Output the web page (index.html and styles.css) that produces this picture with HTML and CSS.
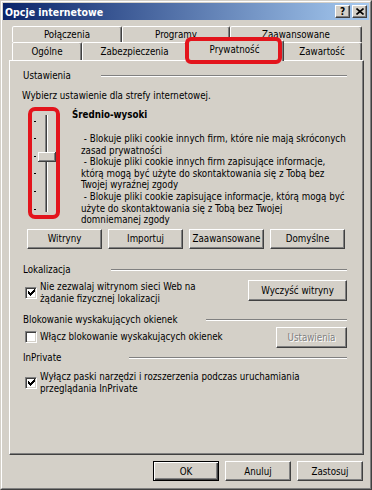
FILE: index.html
```html
<!DOCTYPE html>
<html lang="pl">
<head>
<meta charset="utf-8">
<title>Opcje internetowe</title>
<link rel="stylesheet" href="styles.css">
</head>
<body>
<div class="window">
  <div class="frame">
    <div class="titlebar">
      <span class="title">Opcje internetowe</span>
      <div class="tbtns">
        <span class="tbtn">?</span>
        <span class="tbtn"><svg width="8" height="7" viewBox="0 0 8 7"><path d="M0.5 0.5 L7.5 6.5 M7.5 0.5 L0.5 6.5" stroke="#000" stroke-width="1.6" fill="none"/></svg></span>
      </div>
    </div>
    <div class="content">
      <div class="tabs">
        <div class="tabrow row1">
          <div class="tab w-pol">Połączenia</div>
          <div class="tab w-prog">Programy</div>
          <div class="tab w-zaaw">Zaawansowane</div>
        </div>
        <div class="tabrow row2">
          <div class="tab w-og">Ogólne</div>
          <div class="tab w-zab">Zabezpieczenia</div>
          <div class="tab w-pryw active">Prywatność</div>
          <div class="tab w-zaw">Zawartość</div>
        </div>
      </div>
      <div class="panel">
        <div class="ghead"><span>Ustawienia</span><i class="etch e-ust"></i></div>
        <div class="intro">Wybierz ustawienie dla strefy internetowej.</div>
        <div class="settings">
          <div class="slider">
            <svg width="24" height="104" viewBox="0 0 24 104" shape-rendering="crispEdges">
              <rect x="13" y="4" width="1" height="97" fill="#808080"/>
              <rect x="14" y="4" width="1" height="97" fill="#404040"/>
              <rect x="15" y="4" width="1" height="97" fill="#ffffff"/>
              <rect x="2" y="10" width="2" height="1" fill="#000"/>
              <rect x="2" y="27" width="2" height="1" fill="#000"/>
              <rect x="2" y="45" width="2" height="1" fill="#000"/>
              <rect x="2" y="62" width="2" height="1" fill="#000"/>
              <rect x="2" y="80" width="2" height="1" fill="#000"/>
              <rect x="2" y="98" width="2" height="1" fill="#000"/>
              <rect x="6" y="41" width="18" height="10" fill="#d4d0c8"/>
              <rect x="6" y="41" width="18" height="1" fill="#ffffff"/>
              <rect x="6" y="41" width="1" height="10" fill="#ffffff"/>
              <rect x="23" y="41" width="1" height="10" fill="#404040"/>
              <rect x="6" y="50" width="18" height="1" fill="#404040"/>
              <rect x="22" y="42" width="1" height="8" fill="#808080"/>
              <rect x="7" y="49" width="16" height="1" fill="#808080"/>
            </svg>
          </div>
          <div class="level">
            <div class="level-name">Średnio-wysoki</div>
            <div class="desc">&nbsp;- Blokuje pliki cookie innych firm, które nie mają skróconych<br>zasad prywatności<br>&nbsp;- Blokuje pliki cookie innych firm zapisujące informacje,<br>którą mogą być użyte do skontaktowania się z Tobą bez<br>Twojej wyraźnej zgody<br>&nbsp;- Blokuje pliki cookie zapisujące informacje, którą mogą być<br>użyte do skontaktowania się z Tobą bez Twojej<br>domniemanej zgody</div>
          </div>
        </div>
        <div class="btnrow">
          <button class="btn">Witryny</button>
          <button class="btn">Importuj</button>
          <button class="btn">Zaawansowane</button>
          <button class="btn">Domyślne</button>
        </div>

        <div class="ghead g-loc"><span>Lokalizacja</span><i class="etch e-loc"></i></div>
        <div class="chkrow r-loc">
          <span class="chk"><svg width="7" height="7" viewBox="0 0 7 7" shape-rendering="crispEdges"><path d="M0 2h1v3h-1z M1 3h1v3h-1z M2 4h1v3h-1z M3 3h1v3h-1z M4 2h1v3h-1z M5 1h1v3h-1z M6 0h1v3h-1z" fill="#000000"/></svg></span>
          <span class="chklabel">Nie zezwalaj witrynom sieci Web na<br>żądanie fizycznej lokalizacji</span>
          <button class="btn btn-clear">Wyczyść witryny</button>
        </div>

        <div class="ghead g-pop"><span>Blokowanie wyskakujących okienek</span><i class="etch e-pop"></i></div>
        <div class="chkrow r-pop">
          <span class="chk"></span>
          <span class="chklabel">Włącz blokowanie wyskakujących okienek</span>
          <button class="btn btn-set" disabled>Ustawienia</button>
        </div>

        <div class="ghead g-inp"><span>InPrivate</span><i class="etch e-inp"></i></div>
        <div class="chkrow r-inp">
          <span class="chk"><svg width="7" height="7" viewBox="0 0 7 7" shape-rendering="crispEdges"><path d="M0 2h1v3h-1z M1 3h1v3h-1z M2 4h1v3h-1z M3 3h1v3h-1z M4 2h1v3h-1z M5 1h1v3h-1z M6 0h1v3h-1z" fill="#000000"/></svg></span>
          <span class="chklabel">Wyłącz paski narzędzi i rozszerzenia podczas uruchamiania<br>przeglądania InPrivate</span>
        </div>
      </div>
      <div class="footer">
        <button class="btn btn-default">OK</button>
        <button class="btn">Anuluj</button>
        <button class="btn">Zastosuj</button>
      </div>
    </div>
  </div>
</div>
</body>
</html>
```

FILE: styles.css
```css
* { box-sizing: border-box; }
html, body { margin: 0; padding: 0; }
body {
  width: 372px;
  height: 490px;
  overflow: hidden;
  background: #d4d0c8;
  font-family: "DejaVu Sans Condensed", "Liberation Sans", sans-serif;
  font-size: 9.7px;
  color: #000;
}
.window {
  width: 372px;
  height: 490px;
  border: 1px solid;
  border-color: #d4d0c8 #404040 #404040 #d4d0c8;
}
.frame {
  height: 100%;
  border: 1px solid;
  border-color: #ffffff #808080 #808080 #ffffff;
  padding: 1px;
  display: flex;
  flex-direction: column;
}
.titlebar {
  height: 17px;
  flex: none;
  background: linear-gradient(to right, #0a246a, #a6caf0);
  display: flex;
  align-items: center;
  padding: 0 2px 0 2px;
}
.title {
  flex: 1;
  color: #fff;
  font-weight: bold;
  font-size: 10.5px;
  white-space: nowrap;
}
.tbtns { display: flex; gap: 2px; }
.tbtn {
  width: 15px;
  height: 13px;
  background: #d4d0c8;
  border: 1px solid;
  border-color: #ffffff #404040 #404040 #ffffff;
  box-shadow: inset -1px -1px #808080;
  display: flex;
  align-items: center;
  justify-content: center;
  font-weight: bold;
  font-size: 10px;
  line-height: 1;
}
.content {
  flex: 1;
  padding: 6px 5px 0 6px;
  display: flex;
  flex-direction: column;
}
.tabs { padding-left: 3px; }
.tabrow { display: flex; }
.row1 { height: 16px; }
.row2 { height: 18px; }
.tab {
  height: 100%;
  background: #d4d0c8;
  border: 1px solid;
  border-bottom: none;
  border-color: #ffffff #404040 transparent #ffffff;
  box-shadow: inset -1px 0 #808080;
  border-radius: 2px 2px 0 0;
  display: flex;
  align-items: center;
  justify-content: center;
  white-space: nowrap;
}
.w-pol { width: 110px; }
.w-prog { width: 108px; }
.w-zaaw { width: 132px; }
.w-og { width: 70px; }
.w-zab { width: 105px; }
.w-pryw { width: 95px; }
.w-zaw { width: 80px; }
.tab.active {
  position: relative;
  z-index: 2;
  width: 99px;
  height: 21px;
  margin: -2px -2px -1px -2px;
  padding-bottom: 3px;
}
.tab.active::after {
  content: "";
  position: absolute;
  left: -1px;
  right: 1px;
  top: -4px;
  bottom: -3px;
  border: 4px solid #e3141c;
  border-radius: 6px;
}
.panel {
  height: 395px;
  flex: none;
  border: 1px solid;
  border-color: #ffffff #404040 #404040 #ffffff;
  box-shadow: inset -1px -1px #808080;
  padding: 9px 16px 0 13px;
}
.ghead {
  display: flex;
  align-items: center;
  height: 12px;
  line-height: 12px;
  white-space: nowrap;
}
.etch {
  margin-left: auto;
  height: 2px;
  border-top: 1px solid #808080;
  border-bottom: 1px solid #ffffff;
}
.e-ust { width: 246px; }
.e-loc { width: 236px; }
.e-pop { width: 141px; }
.e-inp { width: 218px; }
.intro { margin-top: 8px; margin-left: -1px; line-height: 12px; white-space: nowrap; }
.settings { display: flex; margin-top: 5px; }
.slider {
  flex: none;
  width: 32px;
  height: 112px;
  margin-left: 5px;
  border: 4px solid #e3141c;
  border-radius: 7px;
}
.slider svg { display: block; }
.level { margin-left: 12px; padding-top: 2px; }
.level-name { font-weight: bold; line-height: 12px; }
.desc { margin-top: 12px; margin-left: 9px; line-height: 11.6px; white-space: nowrap; }
.btn {
  font: inherit;
  color: #000;
  padding: 0;
  margin: 0;
  height: 20px;
  background: #d4d0c8;
  border: 1px solid;
  border-color: #ffffff #404040 #404040 #ffffff;
  box-shadow: inset -1px -1px #808080;
  white-space: nowrap;
}
.btnrow { display: flex; gap: 6px; margin-top: 3px; margin-left: 4px; }
.btnrow .btn { width: 75px; }
.g-loc { margin-top: 15px; }
.g-pop { margin-top: 9px; }
.g-inp { margin-top: 4px; }
.chkrow { display: flex; margin-left: 2px; }
.chk {
  flex: none;
  width: 12px;
  height: 12px;
  margin-right: 3px;
  background: #ffffff;
  border: 1px solid;
  border-color: #808080 #ffffff #ffffff #808080;
  box-shadow: inset 1px 1px #404040, inset -1px -1px #d4d0c8;
  display: flex;
  align-items: center;
  justify-content: center;
  align-self: center;
}
.chklabel { line-height: 12px; white-space: nowrap; }
.r-loc { margin-top: 5px; align-items: flex-start; }
.btn-clear { margin-left: auto; margin-top: -1px; width: 99px; height: 21px; }
.r-pop { margin-top: 1px; align-items: center; }
.btn-set {
  margin-left: auto;
  width: 71px;
  height: 21px;
  color: #808080;
  text-shadow: 1px 1px #ffffff;
}
.r-inp { margin-top: 7px; align-items: center; }
.footer {
  display: flex;
  justify-content: flex-end;
  gap: 6px;
  margin-top: 6px;
  padding-right: 1px;
}
.footer .btn { width: 66px; }
.btn-default {
  border-color: #000;
  box-shadow: inset 1px 1px #ffffff, inset -1px -1px #404040, inset -2px -2px #808080;
}
```
